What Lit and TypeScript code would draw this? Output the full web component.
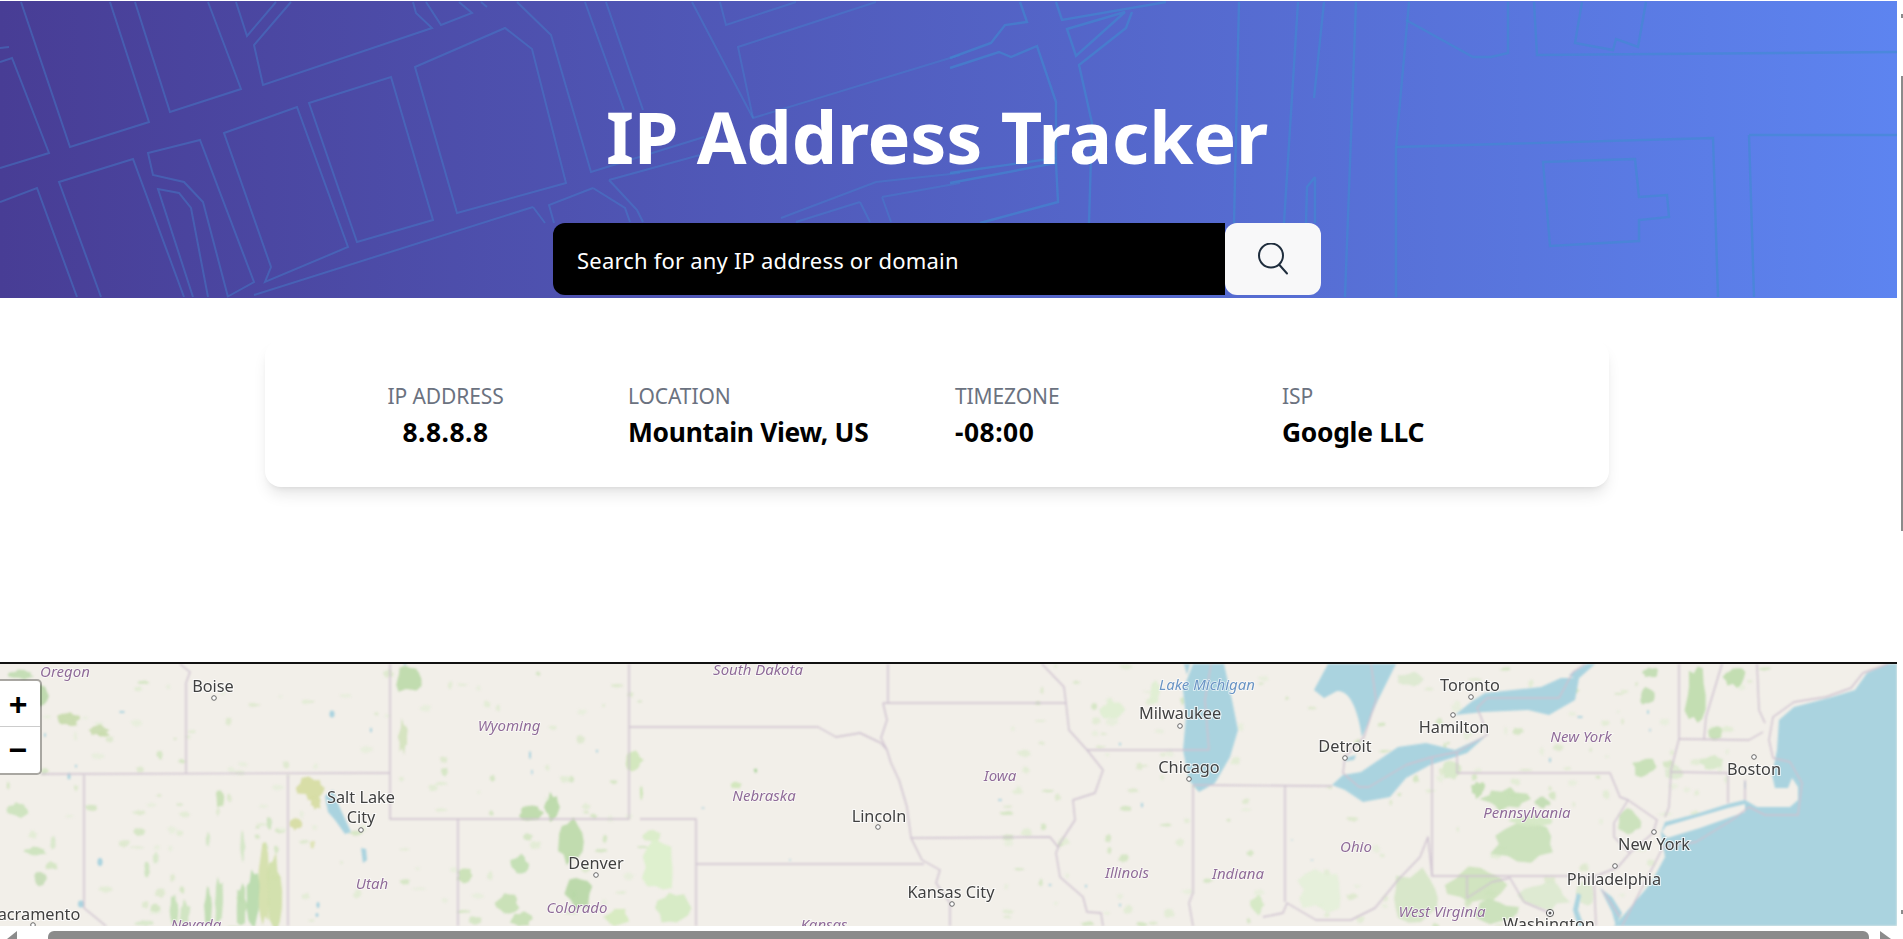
import { LitElement, html, css, svg } from "lit";
import { customElement } from "lit/decorators.js";

const headerLines = [
  "M0 48L9 47",
  "M21 2L70 147L149 122L110 2",
  "M135 2L170 112L241 89L208 2",
  "M236 2L247 36L276 2",
  "M291 2L254 45L263 85L432 28L416 13L413 2",
  "M426 2L441 25L472 13L459 2M481 2L487 7",
  "M0 62L12 58L49 153L0 168",
  "M0 202L37 188L77 297",
  "M101 297L59 182L133 159L184 297",
  "M227 297L254 282L200 140L148 153L153 175L184 182L203 202L228 297",
  "M193 297L158 189L179 193L191 208L208 297",
  "M224 133L297 107L348 247L265 282L271 267Z",
  "M309 103L391 77L433 220L357 242Z",
  "M415 67L505 28L532 49L566 183L457 213Z",
  "M517 2L551 35L591 172L704 137",
  "M585 2L624 110M606 2L643 110",
  "M692 2L753 118L960 55",
  "M720 2L726 25L796 2",
  "M876 2L738 47L753 118",
  "M781 218L876 182L960 173",
  "M609 180L729 147M609 180L637 210L643 222",
  "M593 188L549 205L554 223M593 188L625 208L630 222",
  "M533 207L254 295M533 207L545 223",
  "M882 197L960 183M882 197L891 222",
  "M860 202L796 222M860 202L870 222",
];
const headerLinesRight = [
  "M1020 2L1027 22L1005 25L991 43L950 58",
  "M950 68L999 52L1011 57L1037 46L1056 102L1056 163L950 183",
  "M950 173L1056 158",
  "M1056 163L1058 202L980 223",
  "M1056 2L1062 20L1166 2",
  "M1067 29L1125 12L1076 56Z",
  "M1132 12L1126 28L1079 65L1092 123L1089 223",
  "M1239 2L1234 223",
  "M1298 2L1284 223",
  "M1324 2L1314 98",
  "M1356 2L1345 297",
  "M1315 177L1307 187L1306 223M1315 177L1315 223",
  "M1409 2L1396 147L1396 297",
  "M1406 20L1473 57L1491 57L1508 53L1508 2",
  "M1534 2L1537 55L1897 52",
  "M1582 2L1575 43L1613 50L1616 39L1638 47L1646 2",
  "M1396 147L1713 138L1718 297",
  "M1749 135L1897 135M1749 135L1754 297",
  "M1543 162L1635 159L1639 197L1667 195L1669 217L1639 220L1639 241L1550 246Z",
];

const LAND = "#f2efe9";

const waters = [
  "M1193 664L1183 690L1186 717L1183 750L1189 780L1199 792L1215 783L1230 757L1238 730L1232 700L1224 664Z",
  "M1328 664L1314 690L1324 698L1337 691C1350 690 1358 710 1362 737L1378 700L1396 664Z",
  "M1332 785L1343 775L1361 772L1398 747L1426 743L1455 750L1487 735L1467 753L1430 765L1406 778L1390 797L1363 802L1345 790Z",
  "M1455 715L1471 702L1485 693L1541 687L1561 678L1579 678L1575 700L1549 715L1528 710L1483 712Z",
  "M1569 675L1587 664L1595 664L1577 680Z",
  "M1345 758L1356 755L1354 760L1346 761Z",
  "M1888 664L1867 673L1855 690L1832 697L1794 707L1779 720L1777 750L1772 775L1775 788L1788 788L1792 778L1798 787L1798 800L1790 807L1757 807L1745 800L1728 804L1696 814L1665 822L1661 833L1665 857L1651 883L1622 917L1614 926L1897 926L1897 664Z",
  "M325 796L333 790L339 806L351 832L345 834L335 820L328 812Z",
  "M361 848L366 849L367 860L363 863Z",
  "M1600 888L1612 897L1622 913L1616 926L1612 912Z",
  "M1577 893L1581 895L1578 910L1584 926L1578 926L1573 910Z",
  "M1184 664L1190 664L1187 675Z",
];
const landPatches = [
  "M1662 832L1666 826L1728 808L1745 804L1745 812L1700 828L1667 838Z",
];
const lakes: [number, number, number, number][] = [
  [69, 776, 3, 7],[122, 712, 6, 2],[100, 862, 5, 8],[81, 904, 6, 7],[45, 735, 2, 4],[76, 766, 2, 3],
  [332, 714, 5, 7],[371, 730, 2, 5],[318, 905, 3, 6],[317, 915, 3, 4],[405, 663, 2, 5],[530, 755, 2, 8],[532, 772, 1.5, 5],
  [597, 751, 2, 3],[703, 808, 3, 1.5],[790, 860, 2, 1.5],[1000, 800, 4, 2],[1050, 885, 3, 2],[1086, 886, 2, 3],
  [1120, 905, 2, 3],[1142, 805, 2, 5],[1120, 744, 2, 3],[1580, 717, 6, 2],[1550, 760, 2, 5],[1648, 712, 2, 4],
  [1745, 785, 2, 8],[1650, 730, 1.5, 3],[1292, 840, 2, 1],[1312, 860, 3, 1],[1690, 655, 1, 1],
];
const forests: [number, number, number, number, string][] = [
  [30, 682, 20, 28, "#b9d7a8"],[8, 670, 26, 9, "#c0dcb0"],[56, 712, 24, 14, "#c6daab"],[98, 732, 12, 5, "#c6daab"],[88, 724, 20, 12, "#c9dcae"],
  [394, 664, 28, 30, "#bbd9a9"],[398, 720, 10, 34, "#d3e2bd"],[625, 750, 18, 20, "#cfe6b9"],
  [298, 777, 28, 22, "#d5dba0"],[310, 795, 12, 14, "#d5dba0"],[290, 818, 12, 12, "#d5dba0"],[310, 840, 5, 8, "#dbe2b0"],
  [518, 805, 24, 15, "#bbd9a9"],[544, 793, 16, 28, "#b8d8a6"],[556, 820, 28, 44, "#bbd9a9"],[566, 878, 26, 32, "#b6d6a4"],
  [510, 855, 18, 18, "#c0deb0"],[457, 868, 16, 15, "#c8e0b4"],[495, 893, 24, 20, "#c5dfb3"],[510, 912, 22, 14, "#c5dfb3"],[605, 908, 24, 18, "#d5eabe"],
  [258, 847, 12, 79, "#d3dfa9"],[266, 855, 16, 71, "#cfdfa7"],[246, 870, 14, 56, "#b6d9aa"],[235, 885, 12, 41, "#bcdcae"],
  [204, 885, 8, 41, "#bddcae"],[214, 880, 10, 46, "#c4e0b6"],[170, 895, 8, 31, "#c4e0b6"],[180, 900, 10, 26, "#cde3bf"],
  [144, 860, 6, 18, "#cde3bf"],[153, 852, 6, 12, "#d7e8ca"],[216, 788, 8, 20, "#c6dfb3"],[206, 832, 4, 14, "#d2e6c4"],[240, 832, 5, 30, "#d2e6c4"],[266, 816, 6, 14, "#cde3bf"],
  [24, 847, 22, 9, "#cbe2bb"],[34, 870, 12, 18, "#c4dcb5"],[8, 802, 20, 15, "#cbe2bb"],[50, 835, 6, 16, "#d7e8ca"],[135, 920, 18, 6, "#d7e8ca"],
  [641, 830, 20, 12, "#d8ecc6"],[640, 842, 38, 50, "#dcefcb"],[655, 890, 36, 36, "#d4eac2"],[730, 782, 12, 7, "#cfe6b9"],[754, 768, 3, 5, "#a9d39a"],[640, 785, 3, 16, "#c9e4b3"],
  [1685, 664, 21, 62, "#bedcac"],[1642, 667, 17, 11, "#c0dcb0"],[1640, 688, 14, 18, "#c0dcb0"],[1724, 667, 21, 20, "#bedcac"],[1708, 727, 16, 12, "#c4dfb4"],[1632, 758, 24, 18, "#c4dfb4"],
  [1471, 781, 14, 17, "#bedcac"],[1483, 788, 44, 22, "#c4dfb4"],[1534, 796, 16, 12, "#c0dcb0"],[1492, 825, 64, 38, "#c8e0b8"],[1510, 815, 40, 12, "#d4e8c4"],[1618, 808, 24, 28, "#c8e0b8"],
  [1385, 870, 60, 56, "#d5e6c6"],[1445, 865, 60, 40, "#cde2bb"],[1470, 900, 50, 26, "#c8e0b8"],[1520, 880, 50, 30, "#dbe9cf"],[1575, 880, 22, 26, "#dbe9cf"],
  [1663, 765, 20, 15, "#dbe9cf"],[1700, 755, 24, 16, "#d6e8c8"],[1500, 700, 20, 8, "#dbe9cf"],[1398, 672, 26, 14, "#dbe9cf"],[1440, 760, 24, 20, "#d6e8c8"],
  [1100, 700, 24, 20, "#dfeed2"],[1150, 680, 10, 26, "#dfeed2"],[1296, 870, 50, 40, "#e4efd9"],[1250, 895, 14, 20, "#d3e8c2"],
];

const borders = [
  "M41 774L390 773",
  "M180 664L190 672L186 683L186 773",
  "M390 664L390 819L629 819L629 664",
  "M629 727L818 727L836 737L860 733L881 743L887 750",
  "M288 775L288 926",
  "M84 775L84 908L106 926",
  "M458 819L458 926",
  "M640 819L696 819L696 926",
  "M696 864L924 864",
  "M887 750L891 763L899 780L907 807L911 838L922 860L940 870L936 883L950 903",
  "M883 703L1066 703",
  "M888 664L888 703",
  "M883 703L887 720L881 738L887 750",
  "M1042 664L1064 687L1066 703L1069 730L1087 750L1103 770L1095 793L1073 800L1075 820L1060 843L1056 853L1060 877L1083 897L1087 912L1101 913L1103 926",
  "M911 838L1050 837L1058 847",
  "M950 903L950 926",
  "M1087 750L1209 750",
  "M1211 664L1205 700L1209 750",
  "M1193 785L1193 893L1189 903L1193 926",
  "M1193 785L1332 786",
  "M1285 786L1285 902",
  "M1263 917L1283 913L1287 903L1304 913L1316 920L1351 920L1375 908L1398 880L1420 857L1428 837L1432 876",
  "M1371 664L1376 700L1364 737L1345 757L1343 773L1359 787L1369 787L1406 765L1432 757L1457 752L1487 735L1481 717L1477 708L1487 698L1559 698L1573 672L1585 664",
  "M1432 757L1432 876L1565 876L1594 877",
  "M1457 752L1457 773L1610 773L1620 797L1628 800L1657 820L1653 833L1630 853L1618 867L1594 877L1596 926",
  "M1628 800L1614 823L1614 837L1630 853",
  "M1467 877L1467 898L1492 882L1510 878L1524 902L1550 913",
  "M1679 664L1679 739L1671 770L1669 807L1665 817",
  "M1679 739L1749 740L1763 732",
  "M1671 772L1728 773L1728 803",
  "M1745 780L1745 800",
  "M1722 664L1706 717L1704 739",
  "M1757 664L1759 710L1765 723",
  "M1602 890L1620 917",
  "M1622 926L1655 863L1663 847L1696 842L1732 820L1749 807L1765 815L1798 815L1802 783L1790 762L1773 758L1769 740L1773 717L1794 702L1826 697L1851 688L1863 673L1888 664",
];

const cities: [string, number, number][] = [
  ["Boise", 213, 692],["Salt Lake", 361, 803],["City", 361, 823],["Denver", 596, 869],["Lincoln", 879, 822],
  ["Kansas City", 951, 898],["Milwaukee", 1180, 719],["Chicago", 1189, 773],["Detroit", 1345, 752],["Toronto", 1470, 691],
  ["Hamilton", 1454, 733],["Boston", 1754, 775],["New York", 1654, 850],["Philadelphia", 1614, 885],["acramento", 39, 920],
  ["Washington", 1549, 930],
];
const states: [string, number, number][] = [
  ["Oregon", 65, 677],["Wyoming", 509, 731],["South Dakota", 758, 675],["Nebraska", 764, 801],["Iowa", 1000, 781],
  ["Utah", 372, 889],["Colorado", 577, 913],["Illinois", 1127, 878],["Indiana", 1238, 879],["Ohio", 1356, 852],
  ["New York", 1581, 742],["Pennsylvania", 1527, 818],["West Virginia", 1442, 917],["Nevada", 196, 930],["Kansas", 824, 930],
];
const dots: [number, number][] = [
  [214, 698],[361, 830],[596, 875],[878, 827],[952, 904],[1180, 726],[1189, 779],[1345, 758],
  [1471, 697],[1453, 715],[1754, 757],[1654, 832],[1615, 866],[33, 925],
];

function prng(seed: number) {
  let s = seed * 7919 + 13;
  return () => ((s = (s * 16807) % 2147483647) % 1000) / 1000;
}

function blob(x: number, y: number, w: number, h: number, seed: number) {
  const cx = x + w / 2, cy = y + h / 2;
  const n = 14;
  const rnd = prng(seed);
  const pts: string[] = [];
  for (let i = 0; i < n; i++) {
    const a = (i / n) * Math.PI * 2;
    const r = 0.68 + rnd() * 0.5;
    pts.push(`${(cx + Math.cos(a) * (w / 2) * r).toFixed(1)} ${(cy + Math.sin(a) * (h / 2) * r).toFixed(1)}`);
  }
  return "M" + pts.join("L") + "Z";
}

const specks: [number, number, number, number, string][] = (() => {
  const r = prng(41);
  const tones = ["#e3ecd6", "#dfe9d0", "#e8eedd", "#d6e6c6"];
  const out: [number, number, number, number, string][] = [];
  for (let i = 0; i < 340; i++) {
    const westOrEast = r() < 0.45;
    const x = westOrEast ? r() * 640 : 1000 + r() * 760;
    const y = 664 + r() * 262;
    out.push([x, y, 3 + r() * 11, 2 + r() * 7, tones[Math.floor(r() * 4) % 4]]);
  }
  return out;
})();

@customElement("app-root")
export class AppRoot extends LitElement {
  static styles = css`
    :host { display: block; height: 939px; width: 1903px; overflow: hidden; background: #fff;
      font-family: "Noto Sans", "Open Sans", sans-serif; }
    .page { display: flex; height: 939px; }
    .col { width: 1897px; display: flex; flex-direction: column; }
    .vbar { width: 6px; box-sizing: border-box; position: relative; }
    .vbar .t { position: absolute; left: 4px; top: 76px; width: 2px; height: 455px; background: #8b8b8b; }
    .vbar .d1, .vbar .d2 { position: absolute; left: 4px; width: 2px; height: 4px; background: #8b8b8b; }
    .vbar .d1 { top: 14px; }
    .vbar .d2 { top: 910px; }
    .hero { position: relative; height: 297px; margin-top: 1px; width: 1897px;
      background: linear-gradient(90deg, #483d95 0%, #5d84f0 100%); overflow: hidden; }
    .hero-bg { position: absolute; left: 0; top: -1px; width: 1897px; height: 298px; }
    .hero-inner { position: relative; width: 1874px; display: flex; flex-direction: column; align-items: center; }
    h1 { margin: 89px 0 0; height: 92px; font-size: 72px; line-height: 92px; font-weight: 700; color: #fff; letter-spacing: -0.2px; white-space: nowrap; }
    form { margin-top: 41px; display: flex; width: 768px; height: 72px; }
    .field { flex: 1; background: #000; color: #fff; border-radius: 12px 0 0 12px; font-size: 22px; line-height: 74px; padding-left: 24px; letter-spacing: .2px; }
    .go { width: 96px; background: #f8f8f9; border-radius: 12px; display: flex; align-items: center; justify-content: center; }
    .go svg { width: 32px; height: 32px; display: block; }
    .card-row { width: 1874px; display: flex; justify-content: center; margin-top: 42px; }
    .card { width: 1344px; height: 147px; box-sizing: border-box; border-radius: 16px; background: #fff;
      box-shadow: 0 10px 15px -3px rgba(0,0,0,.1), 0 4px 6px -4px rgba(0,0,0,.1);
      display: grid; grid-template-columns: 363px 327px 327px 327px; padding-top: 42px; }
    .cell { display: flex; flex-direction: column; }
    .cell.first { align-items: center; padding-right: 2px; }
    .lbl { font-size: 21px; line-height: 28px; color: #6b7280; letter-spacing: -0.1px; }
    .val { font-size: 26.4px; line-height: 32px; font-weight: 700; color: #000; margin-top: 6px; letter-spacing: -0.3px; white-space: nowrap; }
    .val.num { letter-spacing: .5px; }
    .map-wrap { position: relative; margin-top: 175px; border-top: 2px solid #111; height: 262px; background: #f2efe9; overflow: hidden; width: 1897px; }
    .map { position: absolute; left: 0; top: -664px; width: 1897px; height: 1000px; }
    .tiles { filter: blur(.8px); }
    .soft { filter: blur(1.1px); }
    .labels { filter: blur(.25px); }
    .city { font-size: 16.3px; fill: #404040; text-anchor: middle; paint-order: stroke; stroke: rgba(255,255,255,.75); stroke-width: 2px; font-family: "Noto Sans", sans-serif; }
    .state { font-size: 15px; fill: #8f6b98; font-style: italic; text-anchor: middle; paint-order: stroke; stroke: rgba(255,255,255,.7); stroke-width: 1.5px; font-family: "Noto Sans", sans-serif; }
    .lake { fill: #6a94c4; }
    .zoom { position: absolute; left: -8px; top: 15px; width: 46px; height: 92px; border: 2px solid rgba(0,0,0,.3); border-radius: 5px;
      background: #fff; background-clip: padding-box; display: flex; flex-direction: column; }
    .zoom span { height: 46px; box-sizing: border-box; display: flex; align-items: center; justify-content: center; font: 700 32px/46px "Liberation Sans", sans-serif; color: #000; padding-left: 2px; }
    .zoom span:first-child { border-bottom: 1px solid #ccc; }
    .hbar { height: 13px; display: flex; align-items: flex-end; width: 1897px; }
    .thumb { width: 1821px; height: 8px; margin-left: 31px; background: #8b8b8b; border-radius: 6px 6px 0 0; }
    .al { width: 10px; height: 8px; margin-left: 7px; background: #8b8b8b; clip-path: polygon(100% 0, 0 100%, 100% 100%); }
    .ar { width: 11px; height: 8px; margin-left: 11px; background: #8b8b8b; clip-path: polygon(0 0, 100% 100%, 0 100%); }
  `;

  render() {
    return html`
      <div class="page">
        <div class="col">
          <header class="hero">
            <svg class="hero-bg" viewBox="0 0 1897 298" aria-hidden="true">
              <g fill="none" stroke="#4285d0" stroke-opacity=".42" stroke-width="2">
                ${headerLines.map((d) => svg`<path d=${d}></path>`)}
              </g>
              <g fill="none" stroke="#3f8ad0" stroke-opacity=".6" stroke-width="2.4">
                ${headerLinesRight.map((d) => svg`<path d=${d}></path>`)}
              </g>
            </svg>
            <div class="hero-inner">
              <h1>IP Address Tracker</h1>
              <form>
                <div class="field">Search for any IP address or domain</div>
                <div class="go">
                  <svg viewBox="0 0 32 32" fill="none" stroke="#1f2d3d" stroke-width="2">
                    <circle cx="14" cy="12.5" r="12"></circle>
                    <path d="M22.5 22L30 30.5" stroke-linecap="round"></path>
                  </svg>
                </div>
              </form>
            </div>
          </header>
          <div class="card-row">
            <section class="card">
              <div class="cell first"><span class="lbl">IP ADDRESS</span><span class="val num">8.8.8.8</span></div>
              <div class="cell"><span class="lbl">LOCATION</span><span class="val">Mountain View, US</span></div>
              <div class="cell"><span class="lbl">TIMEZONE</span><span class="val num">-08:00</span></div>
              <div class="cell"><span class="lbl">ISP</span><span class="val">Google LLC</span></div>
            </section>
          </div>
          <div class="map-wrap">
            <svg class="map" viewBox="0 0 1897 1000">
              <g class="soft">
                ${specks.map(([x, y, w, h, c], i) => svg`<path d=${blob(x, y, w, h, i + 101)} fill=${c}></path>`)}
                ${forests.map(([x, y, w, h, c], i) => svg`<path d=${blob(x, y, w, h, i + 3)} fill=${c} fill-opacity=".9"></path>`)}
              </g>
              <g class="tiles">
                ${waters.map((d) => svg`<path d=${d} fill="#aad3df"></path>`)}
                ${landPatches.map((d) => svg`<path d=${d} fill=${LAND}></path>`)}
                ${lakes.map(([x, y, w, h]) => svg`<ellipse cx=${x} cy=${y} rx=${w / 2} ry=${h / 2} fill="#aad3df"></ellipse>`)}
                <g fill="none" stroke="#cfc2d0" stroke-width="1.4" stroke-linejoin="round">
                  ${borders.map((d) => svg`<path d=${d}></path>`)}
                </g>
              </g>
              <g class="labels">
                ${dots.map(([x, y]) => svg`<circle cx=${x} cy=${y} r="2.3" fill="#fff" stroke="#666" stroke-width="1"></circle>`)}
                <circle cx="1550" cy="913" r="3.6" fill="#fff" stroke="#555" stroke-width="1"></circle>
                <circle cx="1550" cy="913" r="1.5" fill="#555"></circle>
                ${cities.map(([t, x, y]) => svg`<text class="city" x=${x} y=${y}>${t}</text>`)}
                ${states.map(([t, x, y]) => svg`<text class="state" x=${x} y=${y}>${t}</text>`)}
                <text class="state lake" x="1207" y="690">Lake Michigan</text>
              </g>
            </svg>
            <div class="zoom"><span>+</span><span>−</span></div>
          </div>
          <div class="hbar">
            <i class="al"></i>
            <div class="thumb"></div>
            <i class="ar"></i>
          </div>
        </div>
        <div class="vbar"><i class="d1"></i><i class="t"></i><i class="d2"></i></div>
      </div>
    `;
  }
}
